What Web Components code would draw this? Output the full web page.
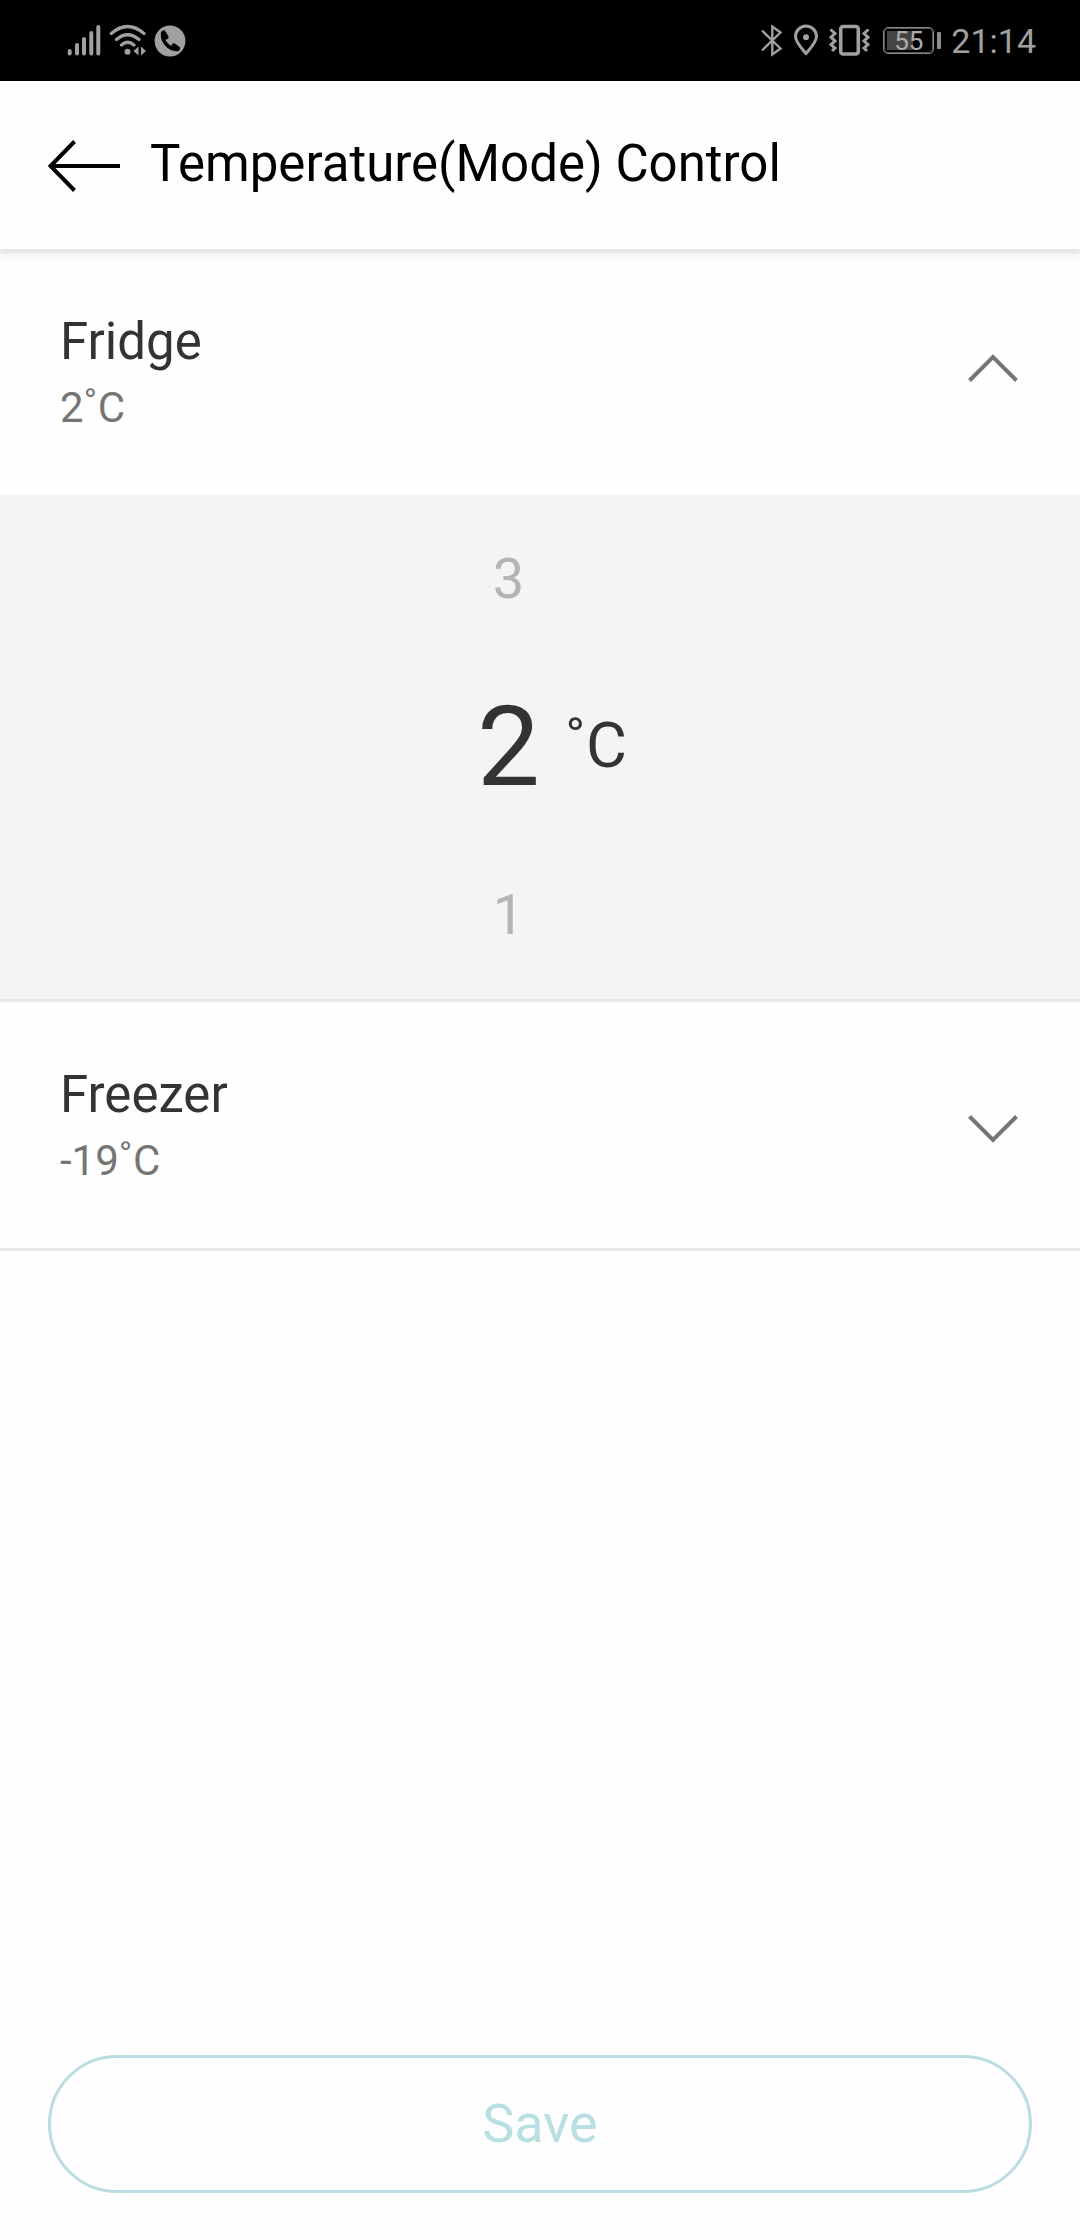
<!DOCTYPE html>
<html lang="en">
<head>
<meta charset="utf-8">
<meta name="viewport" content="width=device-width, initial-scale=1">
<title>Temperature(Mode) Control</title>
<style>
html, body { margin: 0; }
body { background: #fefefe; font-family: Roboto, "Noto Sans", sans-serif; color: #333; }
</style>
</head>
<body>
<temperature-page></temperature-page>
<script>
const define = (name, html, setup) => {
  const template = document.createElement('template');
  template.innerHTML = html;
  customElements.define(name, class extends HTMLElement {
    constructor() {
      super();
      this.attachShadow({ mode: 'open' }).append(template.content.cloneNode(true));
    }
    connectedCallback() { if (setup) setup(this, this.shadowRoot); }
  });
};

define('status-bar', `
<style>
:host { display: flex; justify-content: space-between; align-items: center; height: 81px; padding: 0 44px 0 66px; box-sizing: border-box; background: #000; color: #a0a0a0; }
.group { display: flex; align-items: center; }
.left { gap: 7px; }
.icons { display: flex; align-items: center; gap: 10px; }
svg { display: block; }
.battery { display: flex; align-items: center; gap: 3px; margin: 0 10px 0 13px; }
.cell { box-sizing: border-box; width: 51px; height: 27px; padding: 3px; border: 1px solid #8c8c8c; outline: 1px solid #555; outline-offset: -2px; border-radius: 5px; font-size: 26px; line-height: 21px; text-align: center; color: #acacac; background: linear-gradient(#444, #444) 3px 3px / 26px 19px no-repeat; }
.nub { width: 4px; height: 17px; border-radius: 1px; background: #8c8c8c; }
.time { font-size: 34px; line-height: 40px; }
</style>
<div class="group left">
  <svg width="36" height="34" viewBox="66 24 36 34" stroke="#a0a0a0" stroke-width="4" stroke-linecap="round" aria-label="Signal">
    <path d="M69.7 51v2.5M77 45v8.500M84 39v14.500M91.300 33v20.500M98.300 27v26.500"/>
  </svg>
  <svg width="38" height="34" viewBox="109 24 38 34" fill="none" stroke="#a0a0a0" stroke-width="3.200" stroke-linecap="round" aria-label="Wi-Fi">
    <path d="M111.300 33.500Q127.500 19.500 144 33.500M116.500 39.500Q127.500 30 139 39.500M121.500 45Q127.500 39.500 134 45"/>
    <circle cx="127.500" cy="51.700" r="3" fill="#a0a0a0" stroke="none"/>
    <path d="M138.500 46.500v9l-5-4.500zM141 46.500v9l5-4.500z" fill="#a0a0a0" stroke="none"/>
  </svg>
  <svg width="32" height="34" viewBox="155 24 32 34" aria-label="Call">
    <circle cx="171" cy="41" r="15.400" fill="#a0a0a0"/>
    <path d="M164 33C162 41 170 49.500 178.500 49.500" fill="none" stroke="#000" stroke-width="3.600"/>
    <path d="M164.500 33l2.500 4M175 46l3.500 2.500" fill="none" stroke="#000" stroke-width="5" stroke-linecap="round"/>
  </svg>
</div>
<div class="group">
  <div class="icons">
    <svg width="22" height="34" viewBox="761 24 22 34" fill="none" stroke="#a0a0a0" stroke-width="2.400" aria-label="Bluetooth">
      <path d="M762 30.500L780.500 48.500L772.300 54.500V26.500L780.500 32.500L762 50.500"/>
    </svg>
    <svg width="26" height="34" viewBox="792 24 26 34" fill="none" stroke="#a0a0a0" stroke-width="3" aria-label="Location">
      <path d="M805 53.500C800 47.500 794.500 42 794.500 36.500A10.500 10.500 0 0 1 815.500 36.500C815.500 42 810 47.500 805 53.500Z"/>
      <circle cx="805" cy="37.300" r="3" fill="#a0a0a0" stroke="none"/>
    </svg>
    <svg width="41" height="34" viewBox="828 24 41 34" fill="none" stroke="#a0a0a0" aria-label="Vibrate">
      <rect x="839.700" y="26.500" width="17.600" height="27.500" rx="2.500" stroke-width="3.600"/>
      <path d="M829.500 29.500l4.500 4-4 3.700 4 3.700-4 3.700 4 3.400-3 3M867.500 29.500l-4.500 4 4 3.700-4 3.700 4 3.700-4 3.400 3 3" stroke-width="3"/>
    </svg>
  </div>
  <div class="battery"><div class="cell">55</div><div class="nub"></div></div>
  <time class="time">21:14</time>
</div>`);

define('app-header', `
<style>
:host { display: flex; align-items: center; gap: 30px; height: 168px; padding: 0 48px 2px; box-sizing: border-box; position: relative; z-index: 1; background: #fefefe; color: #000; box-shadow: 0 4px 2px #e8e8e8, 0 8px 9px rgba(0, 0, 0, .06); }
button { display: block; padding: 0; border: 0; background: none; }
svg { display: block; }
h1 { margin: 0; font-size: 51px; line-height: 64px; font-weight: 400; }
</style>
<button aria-label="Back">
  <svg width="72" height="60" viewBox="0 0 72 60" fill="none" stroke="#000" stroke-width="4"><path d="M72 32H3M26.500 7.500L2.500 32L26.500 56.500"/></svg>
</button>
<h1><slot></slot></h1>`);

define('zone-row', `
<style>
:host { display: block; }
:host([divided]) { border-bottom: 3px solid #e8e8e8; }
button { display: flex; justify-content: space-between; align-items: center; box-sizing: border-box; width: 100%; height: 246px; padding: 0 60px; border: 0; background: none; color: #333; font: inherit; text-align: left; }
.text { display: flex; flex-direction: column; gap: 8px; }
.name { font-size: 51px; line-height: 64px; }
.value { font-size: 42px; line-height: 52px; color: #757575; }
svg { display: block; }
:host([open]) svg { transform: rotate(180deg); }
</style>
<button aria-expanded="false">
  <span class="text"><span class="name"><slot name="name"></slot></span><span class="value"><slot></slot></span></span>
  <svg width="54" height="64" viewBox="0 0 54 64" fill="none" stroke="#757575" stroke-width="4"><path d="M3.500 23.500L27 47L50.500 23.500"/></svg>
</button>`, (host, root) => {
  root.querySelector('button').setAttribute('aria-expanded', host.hasAttribute('open'));
});

define('temperature-picker', `
<style>
:host { display: grid; grid-template-columns: 1fr 1fr; grid-auto-rows: 168px; align-items: center; background: #f4f4f4; border-bottom: 3px solid #e8e8e8; }
.number { grid-column: 1; justify-self: end; width: 63px; text-align: center; }
button { padding: 0; border: 0; background: none; font: inherit; font-size: 56px; line-height: 66px; color: #b4b4b4; }
output { font-size: 112px; line-height: 132px; }
.unit { grid-column: 2; padding: 0 0 2px 25px; font-size: 63px; line-height: 76px; }
</style>
<button class="number">3</button>
<output class="number">2</output><span class="unit">˚C</span>
<button class="number">1</button>`);

define('save-button', `
<style>
:host { display: block; padding: 47px 48px; }
button { display: block; box-sizing: border-box; width: 100%; height: 138px; padding: 0; border: 3px solid #b9dde0; border-radius: 69px; background: none; color: #b9dfe2; font: inherit; font-size: 54px; line-height: 64px; }
</style>
<button><slot></slot></button>`);

define('temperature-page', `
<style>
:host { display: flex; flex-direction: column; min-height: 100vh; }
main { flex: 1; }
</style>
<status-bar></status-bar>
<app-header>Temperature(Mode) Control</app-header>
<main>
  <zone-row open><span slot="name">Fridge</span>2˚C</zone-row>
  <temperature-picker></temperature-picker>
  <zone-row divided><span slot="name">Freezer</span>-19˚C</zone-row>
</main>
<save-button>Save</save-button>`);
</script>
</body>
</html>
